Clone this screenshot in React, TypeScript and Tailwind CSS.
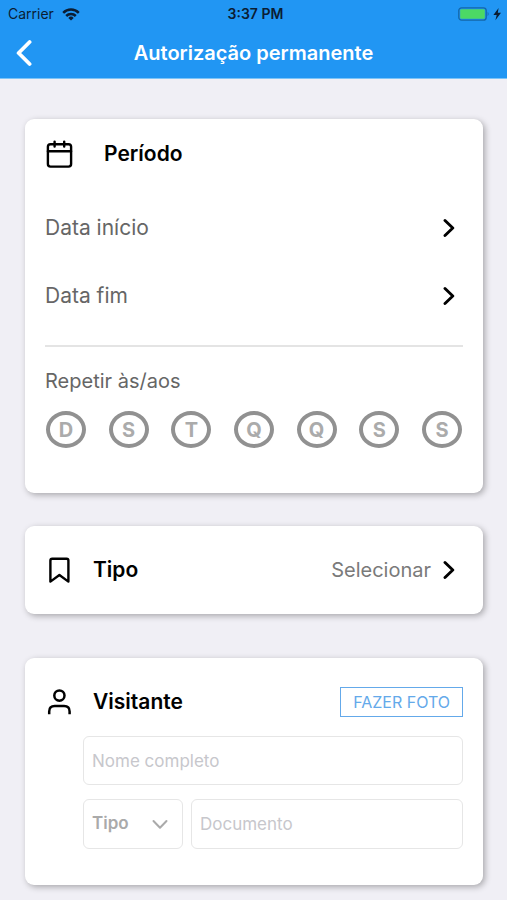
import { useState } from "react";
import type { ReactNode } from "react";

const DAYS = [
  { letter: "D", name: "Domingo" },
  { letter: "S", name: "Segunda" },
  { letter: "T", name: "Terça" },
  { letter: "Q", name: "Quarta" },
  { letter: "Q", name: "Quinta" },
  { letter: "S", name: "Sexta" },
  { letter: "S", name: "Sábado" },
];

function ChevronRight() {
  return (
    <svg width="12" height="20" viewBox="0 0 12 20" fill="none" stroke="#000" strokeWidth="2.9" strokeLinecap="round" strokeLinejoin="round" aria-hidden="true">
      <path d="M2 2.5 9.8 10 2 17.5" />
    </svg>
  );
}

function WifiIcon() {
  return (
    <svg width="18" height="13" viewBox="0 0 18 13" fill="none" stroke="#0b1d33" strokeWidth="2.5" aria-hidden="true">
      <path d="M1.2 4.8A11 11 0 0 1 16.8 4.8" />
      <path d="M4.2 8A6.8 6.8 0 0 1 13.8 8" />
      <path d="M9 12.6 6.3 9.9A3.9 3.9 0 0 1 11.7 9.9Z" fill="#0b1d33" stroke="none" />
    </svg>
  );
}

function BatteryIcon() {
  return (
    <svg width="45" height="14" viewBox="0 0 45 14" aria-hidden="true">
      <rect x="0.8" y="0.8" width="27.4" height="12.4" rx="2.8" fill="none" stroke="#1467a8" strokeWidth="1.3" />
      <rect x="2.2" y="2.2" width="24.6" height="9.6" rx="1.4" fill="#4cd964" />
      <path d="M29.6 4.8Q31.6 7 29.6 9.2Z" fill="#1467a8" />
      <path d="M40.6 1 35.4 7.9H38.7L37.4 13.2 43 5.8H39.8Z" fill="#0b1d33" />
    </svg>
  );
}

function CalendarIcon() {
  return (
    <svg width="28" height="28" viewBox="0 0 28 28" fill="none" stroke="#000" strokeWidth="2.4" strokeLinecap="round" strokeLinejoin="round" aria-hidden="true">
      <rect x="2.9" y="4.2" width="23.2" height="22.4" rx="2.6" />
      <path d="M2.9 11.2H26.1M9.6 1.6V6.6M19.2 1.6V6.6" />
    </svg>
  );
}

function BookmarkIcon() {
  return (
    <svg width="28" height="28" viewBox="0 0 28 28" fill="none" stroke="#000" strokeWidth="2.4" strokeLinejoin="round" aria-hidden="true">
      <path d="M5.4 25.6V4.6Q5.4 2.8 7.2 2.8H21.6Q23.4 2.8 23.4 4.6V25.6L14.4 19Z" />
    </svg>
  );
}

function UserIcon() {
  return (
    <svg width="28" height="28" viewBox="0 0 28 28" fill="none" stroke="#000" strokeWidth="2.5" aria-hidden="true">
      <circle cx="14.4" cy="7.6" r="5.1" />
      <path d="M4.2 26.2V23.4Q4.2 18 9.7 18H19.1Q24.6 18 24.6 23.4V26.2" />
    </svg>
  );
}

function Card({ className, children }: { className: string; children: ReactNode }) {
  return (
    <section className={`rounded-[9px] bg-white px-5 shadow-[2px_2px_6px_rgba(0,0,0,0.3)] ${className}`}>
      {children}
    </section>
  );
}

function DateRow({ label }: { label: string }) {
  return (
    <button type="button" className="flex h-[68px] w-full items-center justify-between pr-2 text-left text-[21px] text-[#666]">
      {label}
      <ChevronRight />
    </button>
  );
}

export default function App() {
  const [selected, setSelected] = useState<number[]>([]);
  const toggle = (i: number) =>
    setSelected((days) => (days.includes(i) ? days.filter((d) => d !== i) : [...days, i]));

  return (
    <div className="min-h-screen bg-[#f0eff5] pb-[15px] font-['Inter',sans-serif] text-black">
      <header className="bg-[#2196f3]">
        <div className="grid h-7 grid-cols-3 items-center pl-2 pr-1 text-sm text-[#0b1d33]">
          <span className="flex items-center gap-2">
            Carrier
            <WifiIcon />
          </span>
          <span className="text-center font-semibold">3:37 PM</span>
          <span className="flex justify-end">
            <BatteryIcon />
          </span>
        </div>
        <div className="grid h-[51px] grid-cols-[48px_1fr_48px] items-center border-b border-[#7cc4f8]">
          <button type="button" aria-label="Voltar" className="flex h-12 items-center pl-4">
            <svg width="17" height="28" viewBox="0 0 17 28" fill="none" stroke="#fff" strokeWidth="3.8" strokeLinecap="round" strokeLinejoin="round" aria-hidden="true">
              <path d="M13.6 3 2.6 14 13.6 25" />
            </svg>
          </button>
          <h1 className="text-center text-xl font-semibold text-white">Autorização permanente</h1>
        </div>
      </header>

      <main className="pl-[25px] pr-6 pt-10">
        <Card className="pb-[45px] pt-[15px]">
          <div className="flex h-10 items-center gap-[31px]">
            <CalendarIcon />
            <h2 className="text-[21px] font-semibold">Período</h2>
          </div>
          <div className="mt-5">
            <DateRow label="Data início" />
            <DateRow label="Data fim" />
          </div>
          <hr className="mt-[15px] border-t-2 border-[#e4e4e4]" />
          <p id="repeat" className="mt-[22px] text-xl leading-6 text-[#666]">Repetir às/aos</p>
          <div role="group" aria-labelledby="repeat" className="mt-[18px] flex justify-between px-px">
            {DAYS.map((day, i) => (
              <button
                key={day.name}
                type="button"
                aria-label={day.name}
                aria-pressed={selected.includes(i)}
                onClick={() => toggle(i)}
                className="flex h-[37px] w-10 items-center justify-center rounded-[50%] border-4 border-[#919191] text-xl font-bold text-[#ababab] aria-pressed:border-[#2196f3] aria-pressed:text-[#2196f3]"
              >
                {day.letter}
              </button>
            ))}
          </div>
        </Card>

        <Card className="mt-[33px]">
          <div className="flex h-[88px] items-center gap-5">
            <BookmarkIcon />
            <h2 className="grow text-[21px] font-semibold">Tipo</h2>
            <button type="button" className="flex items-center gap-3 pr-2 text-xl text-[#7a7a7a]">
              Selecionar
              <ChevronRight />
            </button>
          </div>
        </Card>

        <Card className="mt-11 pb-9 pt-[29px]">
          <div className="flex items-center gap-5">
            <UserIcon />
            <h2 className="grow text-[21px] leading-7 font-semibold">Visitante</h2>
            <button type="button" className="h-[30px] border border-[#64a9ea] px-3 text-base leading-none text-[#64a9ea]">
              FAZER FOTO
            </button>
          </div>
          <div className="mt-[19px] flex flex-col gap-3.5 pl-[38px]">
            <input
              type="text"
              aria-label="Nome completo"
              placeholder="Nome completo"
              className="h-[49px] w-full rounded-md border border-[#e6e6e6] px-2 text-[17px] outline-none placeholder:text-[#c7c7cc]"
            />
            <div className="flex gap-2">
              <div className="relative">
                <select
                  aria-label="Tipo de documento"
                  className="h-[50px] w-[100px] appearance-none rounded-md border border-[#e6e6e6] bg-white px-2 text-[17px] font-semibold text-[#aaa] outline-none"
                >
                  <option>Tipo</option>
                </select>
                <svg className="pointer-events-none absolute right-3.5 top-5" width="18" height="11" viewBox="0 0 18 11" fill="none" stroke="#aaa" strokeWidth="2" strokeLinecap="round" strokeLinejoin="round" aria-hidden="true">
                  <path d="M2.5 2 9 8.8 15.5 2" />
                </svg>
              </div>
              <input
                type="text"
                aria-label="Documento"
                placeholder="Documento"
                className="h-[50px] min-w-0 grow rounded-md border border-[#e6e6e6] px-2 text-[17px] outline-none placeholder:text-[#c7c7cc]"
              />
            </div>
          </div>
        </Card>
      </main>
    </div>
  );
}
